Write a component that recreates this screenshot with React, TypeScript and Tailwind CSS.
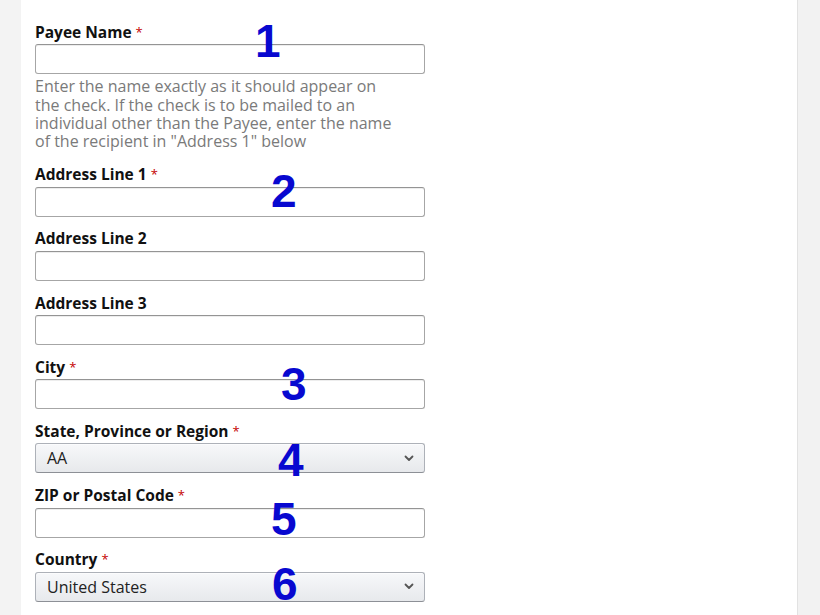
import React from 'react';

interface FieldProps {
  label: string;
  required?: boolean;
  select?: string;
  help?: React.ReactNode;
}

const Chevron: React.FC = () => (
  <svg width="10" height="7" viewBox="0 0 10 7" className="text-[#555]">
    <path d="M1.5 1.5 L5 5 L8.5 1.5" fill="none" stroke="currentColor" strokeWidth="1.8" strokeLinecap="round" strokeLinejoin="round" />
  </svg>
);

const Field: React.FC<FieldProps> = ({ label, required = true, select, help }) => (
  <div className={help ? 'mb-[14.6px]' : 'mb-[12.7px]'}>
    <div className="text-[15.5px] leading-[19px] font-bold text-[#111] mb-[2.5px]">
      {label}
      {required && <span className="text-[#c40000] font-normal text-[13px] ml-[4px] align-top">*</span>}
    </div>
    {select ? (
      <div className="h-[30px] w-[390px] rounded-[3px] border border-[#adb1b8] border-b-[#8d9096] bg-gradient-to-b from-[#f7f8fa] to-[#e7e9ec] shadow-[0_1px_0_rgba(255,255,255,0.6)_inset] flex items-center justify-between pl-[11px] pr-[10px]">
        <span className="text-[16px] text-[#222]">{select}</span>
        <Chevron />
      </div>
    ) : (
      <div className="h-[30px] w-[390px] rounded-[3px] border border-[#a6a6a6] border-t-[#949494] bg-white shadow-[0_1px_0_rgba(0,0,0,0.07)_inset]" />
    )}
    {help && (
      <div className="mt-[3.4px] text-[16px] leading-[18.3px] text-[#7a7a7a]">{help}</div>
    )}
  </div>
);

const marks = [
  { n: '1', x: 255, y: 18 },
  { n: '2', x: 271, y: 168 },
  { n: '3', x: 281, y: 361 },
  { n: '4', x: 278, y: 437 },
  { n: '5', x: 271, y: 496 },
  { n: '6', x: 272, y: 561 },
];

export default function App() {
  return (
    <div
      className="relative w-[820px] h-[615px] overflow-hidden flex bg-[#f2f2f2]"
      style={{ fontFamily: '"Open Sans", "Noto Sans", Arial, sans-serif' }}
    >
      <div className="w-[21px] shrink-0 bg-[#f3f3f3]" />
      <div className="w-[777px] shrink-0 bg-white border-r border-[#e2e2e2] pl-[14px] pt-[22.5px]">
        <Field
          label="Payee Name"
          help={
            <>
              Enter the name exactly as it should appear on
              <br />
              the check. If the check is to be mailed to an
              <br />
              individual other than the Payee, enter the name
              <br />
              of the recipient in "Address 1" below
            </>
          }
        />
        <Field label="Address Line 1" />
        <Field label="Address Line 2" required={false} />
        <Field label="Address Line 3" required={false} />
        <Field label="City" />
        <Field label="State, Province or Region" select="AA" />
        <Field label="ZIP or Postal Code" />
        <Field label="Country" select="United States" />
      </div>
      <div className="flex-1" />

      {marks.map((m) => (
        <span
          key={m.n}
          className="absolute text-[46px] leading-[46px] font-bold text-[#0808d0]"
          style={{ left: m.x, top: m.y, fontFamily: '"Liberation Sans", Arial, sans-serif' }}
        >
          {m.n}
        </span>
      ))}
    </div>
  );
}
